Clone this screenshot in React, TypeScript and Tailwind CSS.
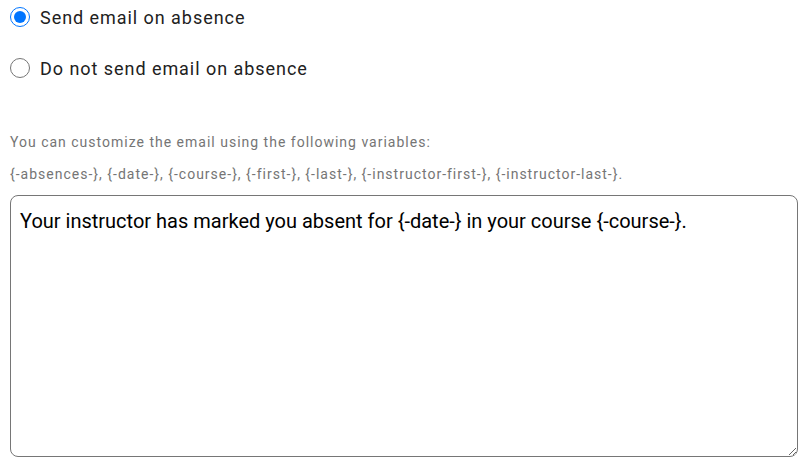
export default function App() {
  const options = [
    { id: 'send', label: 'Send email on absence', checked: true },
    { id: 'nosend', label: 'Do not send email on absence', checked: false },
  ];

  return (
    <div className="w-[804px] h-[460px] bg-white px-[10px] font-['Roboto',sans-serif] overflow-hidden">
      {/* Absence email options */}
      <div className="flex flex-col gap-[31px] pt-[7px]">
        {options.map((opt) => (
          <label key={opt.id} className="flex items-center gap-[10px] h-[20px] text-[18px] tracking-[0.95px] text-[#212121]">
            <input
              type="radio"
              name="absence-email"
              defaultChecked={opt.checked}
              className="w-[20px] h-[20px] m-0"
            />
            {opt.label}
          </label>
        ))}
      </div>

      {/* Variables help */}
      <div className="mt-[48px] text-[14px] tracking-[1px] text-[#757575] leading-[32px]">
        <p>You can customize the email using the following variables:</p>
        <p>{'{-absences-}, {-date-}, {-course-}, {-first-}, {-last-}, {-instructor-first-}, {-instructor-last-}.'}</p>
      </div>

      <textarea
        className="mt-[5px] block w-[788px] h-[262px] border border-[#767676] rounded-[8px] px-[9px] pt-[13px] pb-[10px] text-[20px] text-black leading-[24px] font-['Roboto',sans-serif]"
        defaultValue="Your instructor has marked you absent for {-date-} in your course {-course-}."
      />
    </div>
  );
}
